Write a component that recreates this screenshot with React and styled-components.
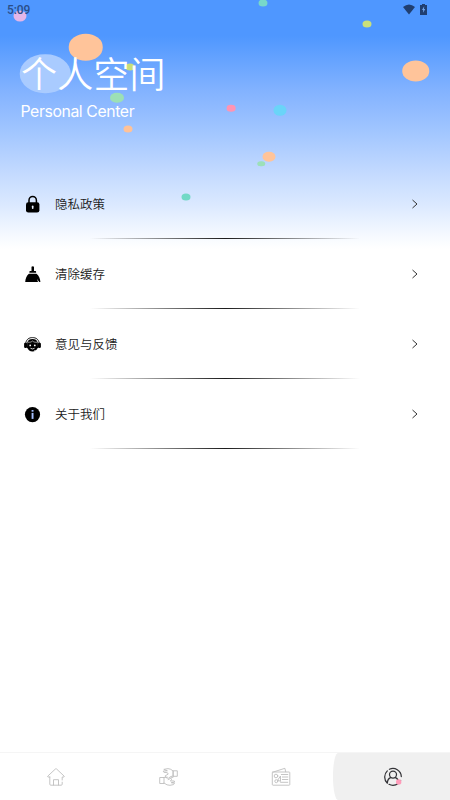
import React from "react";
import styled, { createGlobalStyle } from "styled-components";

const GlobalStyle = createGlobalStyle`
  * { box-sizing: border-box; }
  body { margin: 0; background: #fff; }
`;

const Screen = styled.div`
  position: relative;
  display: flex;
  flex-direction: column;
  width: 450px;
  height: 800px;
  overflow: hidden;
  font-family: "Noto Sans CJK SC", sans-serif;
  background: linear-gradient(to bottom, #4f97ff 0, #4f97ff 36px, #82b2ff 90px, #a0c5ff 130px, #c5dbff 175px, #dbe9ff 205px, #f5f9ff 235px, #fff 249px);
`;

const Confetti = styled.div`
  position: absolute;
  inset: 0;
  pointer-events: none;
`;

const Dot = styled.i`
  position: absolute;
  left: ${(p) => p.$x}px;
  top: ${(p) => p.$y}px;
  width: ${(p) => p.$w}px;
  height: ${(p) => p.$h}px;
  border-radius: 50%;
  background: ${(p) => p.$color};
  transform: translate(-50%, -50%);
`;

const StatusBar = styled.div`
  position: relative;
  display: flex;
  justify-content: space-between;
  align-items: center;
  height: 20px;
  padding: 0 23px 0 7px;
  color: #2a4e88;
`;

const Clock = styled.span`
  font: 500 12px/20px Roboto, sans-serif;
  letter-spacing: -0.1px;
`;

const StatusIcons = styled.div`
  display: flex;
  align-items: center;
  gap: 5px;
  height: 18px;
  align-self: flex-start;
`;

const Heading = styled.header`
  position: relative;
  height: 149px;
  padding: 25px 0 0 20.5px;
  color: #fff;
`;

const Title = styled.h1`
  margin: 0;
  padding-left: 0.5px;
  font-size: 36px;
  line-height: 54px;
  font-weight: 350;
  letter-spacing: 0.2px;
`;

const Subtitle = styled.p`
  margin: 3px 0 0;
  font: 400 15.8px/20px Inter, sans-serif;
  letter-spacing: -0.4px;
`;

const Menu = styled.main`
  position: relative;
  flex: 1;
`;

const MenuRow = styled.div`
  display: flex;
  align-items: center;
  height: 70px;
  padding: 0 30px 0 23px;
  background: linear-gradient(to right, transparent 90px, #1c1c1c 225px, transparent 360px) 0 100% / 100% 1px no-repeat;
`;

const MenuIcon = styled.svg`
  width: 19px;
  height: 19px;
  fill: #000;
`;

const MenuLabel = styled.span`
  flex: 1;
  margin-left: 13px;
  font-size: 12.5px;
  font-weight: 350;
  line-height: 20px;
  color: #1b1b1b;
`;

const Chevron = styled.svg`
  width: 10px;
  height: 12px;
  fill: none;
  stroke: #333;
`;

const TabBar = styled.nav`
  position: relative;
  display: grid;
  grid-template-columns: 110px 112px 111px 117px;
  height: 48px;
  border-top: 1px solid #f5f5f5;
  background: #fff;
`;

const Tab = styled.div`
  display: flex;
  align-items: center;
  justify-content: center;
  padding-left: ${(p) => p.$shift || 0}px;
  background: ${(p) => (p.$active ? "#f0f0f0" : "transparent")};
  border-radius: ${(p) => (p.$active ? "5px 0 0 5px / 50% 0 0 50%" : 0)};
`;

const TabIcon = styled.svg`
  width: 20px;
  height: 20px;
  fill: none;
  stroke: ${(p) => (p.$active ? "#343438" : "#bebebe")};
  stroke-width: ${(p) => (p.$active ? 1.25 : 0.9)};
  stroke-linecap: round;
  stroke-linejoin: round;
`;

const dots = [
  [19.5, 16, 13, 11, "#e4b6e8"],
  [85.5, 47, 34.5, 26.5, "#ffc49a"],
  [45.3, 73.5, 50.5, 39.5, "#a9cbff"],
  [130.2, 66.5, 9, 7, "#c9df78"],
  [116.5, 97.5, 14, 10.5, "#9ce0b5"],
  [127.5, 128.5, 9, 7, "#ffc298"],
  [263, 3, 9, 7, "#78d8ca"],
  [367, 24.3, 9, 7, "#cbe07a"],
  [415.7, 71.3, 27.5, 21, "#ffc49a"],
  [231.4, 108.3, 8.8, 6.6, "#ff94b3"],
  [280, 110.3, 13, 10.5, "#6ad4f8"],
  [269.3, 156.5, 13, 10.5, "#ffc49a"],
  [261.3, 163.7, 7.5, 5.5, "#9ce0b9"],
  [186, 197, 9, 7, "#72d9c6"],
];

const items = [
  {
    label: "隐私政策",
    icon: (
      <>
        <path d="M6 8V5.2a3.7 3.7 0 0 1 7.4 0V8" fill="none" stroke="#000" strokeWidth="1.5" />
        <rect x="3" y="7.2" width="13.4" height="10.4" rx="2.3" />
        <rect x="8.9" y="10.5" width="1.6" height="3.6" rx=".8" fill="#e9f1ff" />
      </>
    ),
  },
  {
    label: "清除缓存",
    icon: (
      <>
        <path d="M8.5 1.8q1.25-1 2.5 0V6h1.5q.6 0 .6.7v1.1H6.4V6.7q0-.7.6-.7h1.5z" />
        <path d="M5.9 8.7h7.6c2.3 1.6 3.7 4.8 3.9 8.4h-1.2l-2.1-3.1.9 3.1H2.2c.2-3.5 1.5-6.8 3.7-8.4z" />
      </>
    ),
  },
  {
    label: "意见与反馈",
    icon: (
      <>
        <path d="M2.8 8C3.5 4.2 6 2.6 9.5 2.6S15.5 4.2 16.2 8" fill="none" stroke="#000" strokeWidth=".9" />
        <path d="M4.2 7.7C5 5.1 6.7 4 9.5 4s4.5 1.1 5.3 3.7l.2 4.5c-1 2.8-3 4.2-5.5 4.2S5 15 4 12.2z" />
        <rect x="1.1" y="7.7" width="3" height="5.3" rx="1.2" />
        <rect x="14.9" y="7.7" width="3" height="5.3" rx="1.2" />
        <path d="M4.8 7.2c2.5.2 3.8-.3 4.7-1.2 1 1 2.4 1.4 4.7 1.2" fill="none" stroke="#fff" strokeWidth=".6" />
        <circle cx="7.2" cy="10.4" r=".9" fill="#fff" />
        <circle cx="11.8" cy="10.4" r=".9" fill="#fff" />
        <path d="M7.5 13.3q2 1.3 4 0M11 15.8h3" fill="none" stroke="#fff" strokeWidth=".8" />
      </>
    ),
  },
  {
    label: "关于我们",
    icon: (
      <>
        <circle cx="9.5" cy="9.6" r="7.6" />
        <rect x="8.6" y="5" width="1.9" height="1.7" fill="#a5bfff" />
        <rect x="8.6" y="7.9" width="1.9" height="6" fill="#a5bfff" />
      </>
    ),
  },
];

const HomeIcon = () => (
  <TabIcon viewBox="0 0 20 20">
    <path d="M3.8 10H1.9q-.6-.4 0-1L9.4 2q.6-.5 1.2 0L18 9q.6.6 0 1h-1.8v3M3.8 10v7.2q0 1 1 1h10.4q1 0 1-1v-2M7.5 18v-5.3h5V18" />
  </TabIcon>
);

const HandsIcon = () => (
  <TabIcon viewBox="0 0 20 20">
    <path d="M5.2 2.3 9 1.6q3 .2 5.2 2.5v5l-2.5.4-2.4 1.8-2.3-.6-.9-1.8 3.1-1.8-.8-1.4-3.5-.4-.7-1.2 3.8-.3zM14.4 3.8h3.9v5.5h-3.9z" />
    <path d="m5 10.5 3.2-.4M5 16.1q3.2 2.5 6 2.2l3.5-.7 1-1.3-3.3-.6 3.4-.5-.3-1.2-4-.1 1.6-1.5-1.3-1-2.5 1.2M1.1 10.5H5v6H1.1zM11.2 11.2l3-1.1" />
  </TabIcon>
);

const NewsIcon = () => (
  <TabIcon viewBox="0 0 20 20">
    <path d="M2 5h16.1q.7 0 .7.7v11.8q0 .7-.7.7H2q-.7 0-.7-.7V5.7Q1.3 5 2 5zM3 4.8l10.9-3.5.8 3.5" />
    <circle cx="5" cy="9" r="1.8" />
    <circle cx="5.3" cy="14.2" r="1.5" />
    <path d="M7 12.7 9.5 9v5zM10.3 7.5h6.5M11.4 10h5.4M11.4 12.5h5.4M9.6 15.3h7.2" />
  </TabIcon>
);

const ProfileIcon = () => (
  <TabIcon viewBox="0 0 20 20" $active>
    <path d="M6.4 2.3A8.4 8.4 0 0 1 18.3 9.6M17.6 13.5A8.4 8.4 0 0 1 6 17.3M4.2 16A8.4 8.4 0 0 1 4.3 3.9" />
    <circle cx="10" cy="7.6" r="3.5" />
    <path d="M4.4 15.8c.1-3 1.2-4.3 3.2-5.1M12.4 10.7c2 .8 3.1 2.1 3.2 5.1" />
    <circle cx="15.7" cy="14.9" r="2.7" fill="#ff9cba" stroke="none" />
  </TabIcon>
);

export default function App() {
  return (
    <>
      <GlobalStyle />
      <Screen>
        <Confetti>
          {dots.map(([x, y, w, h, color]) => (
            <Dot key={`${x}-${y}`} $x={x} $y={y} $w={w} $h={h} $color={color} />
          ))}
        </Confetti>
        <StatusBar>
          <Clock>5:09</Clock>
          <StatusIcons>
            <svg width="12" height="11" viewBox="0 0 12 11" fill="#203e70">
              <path d="M0 3q6-5 12 0L6 10.6z" />
            </svg>
            <svg width="7" height="11" viewBox="0 0 7 11">
              <path d="M2 0h3v1h2v10H0V1h2z" fill="#203e70" />
              <path d="M4.2 2.3 2 6h1.2v2.8L5.2 5H4z" fill="#72a6ed" />
            </svg>
          </StatusIcons>
        </StatusBar>
        <Heading>
          <Title>个人空间</Title>
          <Subtitle>Personal Center</Subtitle>
        </Heading>
        <Menu>
          {items.map((item) => (
            <MenuRow key={item.label}>
              <MenuIcon viewBox="0 0 19 19">{item.icon}</MenuIcon>
              <MenuLabel>{item.label}</MenuLabel>
              <Chevron viewBox="0 0 10 12">
                <path d="m2.5 2 4.5 4-4.5 4" />
              </Chevron>
            </MenuRow>
          ))}
        </Menu>
        <TabBar>
          <Tab $shift={2}><HomeIcon /></Tab>
          <Tab $shift={6}><HandsIcon /></Tab>
          <Tab $shift={6}><NewsIcon /></Tab>
          <Tab $active $shift={3}><ProfileIcon /></Tab>
        </TabBar>
      </Screen>
    </>
  );
}
